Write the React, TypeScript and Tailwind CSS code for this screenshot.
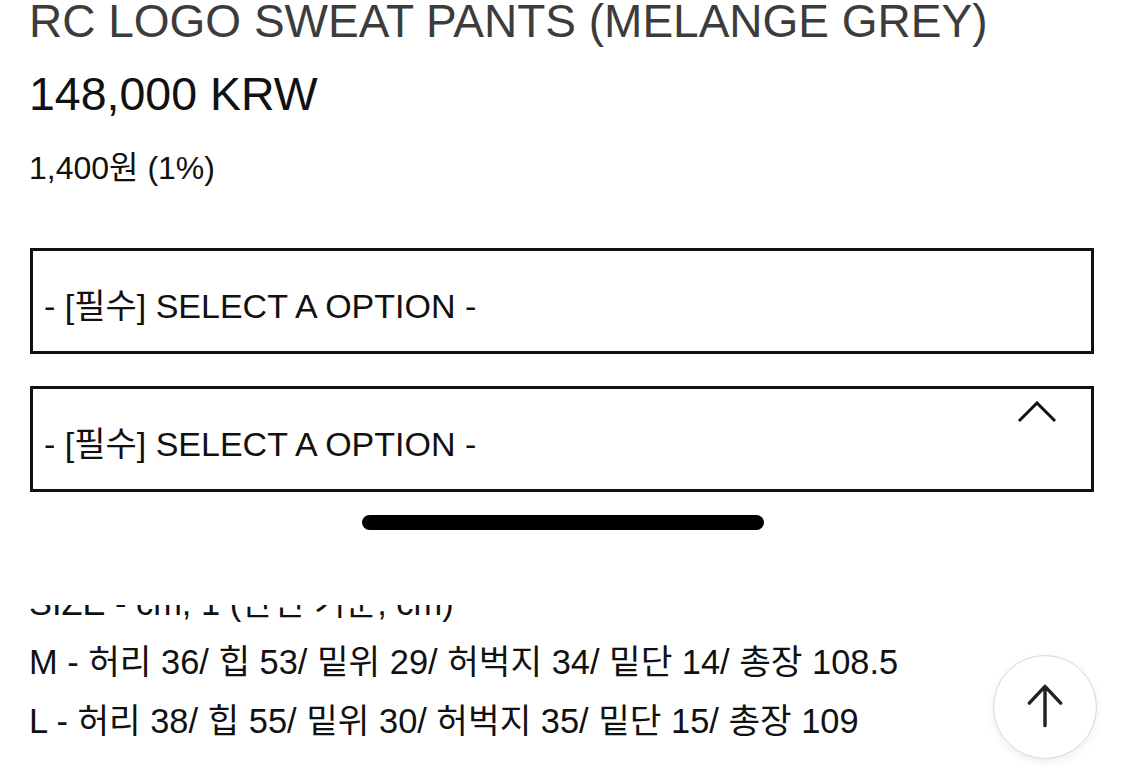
const sizeRows = [
  "M - 허리 36/ 힙 53/ 밑위 29/ 허벅지 34/ 밑단 14/ 총장 108.5",
  "L - 허리 38/ 힙 55/ 밑위 30/ 허벅지 35/ 밑단 15/ 총장 109",
];

const OptionSelect = ({ open }: { open?: boolean }) => (
  <div className="relative ml-px flex h-[106px] w-[1064px] items-center border-[3px] border-[#111] pl-[11px] pt-[10px]">
    <span className="text-[34px] leading-[34px] text-[#111]">- [필수] SELECT A OPTION -</span>
    {open && (
      <svg className="absolute right-[34px] top-[12px]" width="40" height="24" viewBox="0 0 40 24" fill="none">
        <polyline points="2,20 20,2 38,20" stroke="#111" strokeWidth="3" />
      </svg>
    )}
  </div>
);

export default function App() {
  return (
    <div className="relative h-[775px] w-full overflow-hidden bg-white font-['Liberation_Sans','Noto_Sans_CJK_KR',sans-serif]">
      <div className="pl-[29px]">
        <h1 className="text-[46px] font-normal leading-[43px] text-[#3c3c3c]">RC LOGO SWEAT PANTS (MELANGE GREY)</h1>
        <p className="mt-[28px] text-[46.5px] leading-[46px] text-[#111]">148,000 KRW</p>
        <p className="mt-[35px] text-[32px] leading-[32px] text-[#111]">1,400원 (1%)</p>

        <div className="mt-[64px] flex flex-col gap-[32px]">
          <OptionSelect />
          <OptionSelect open />
        </div>
      </div>

      {/* drag handle of the option sheet */}
      <div className="mt-[23px] flex justify-center">
        <div className="h-[15px] w-[402px] rounded-full bg-black" />
      </div>

      {/* size table, partly hidden under the sheet */}
      <div className="mt-[75px] pl-[29px] text-[34.4px] text-[#111]">
        <div className="h-[28px] overflow-hidden">
          <p className="-mt-[31px] leading-[59px]">SIZE - cm, 1 (단면 기준, cm)</p>
        </div>
        {sizeRows.map((row, i) => (
          <p key={i} className="leading-[59px]">{row}</p>
        ))}
      </div>

      <button className="absolute bottom-[16px] right-[28px] flex h-[104px] w-[104px] items-center justify-center rounded-full border border-[#d8d8d8] bg-white shadow-[0_3px_8px_rgba(0,0,0,0.07)]">
        <svg width="104" height="104" viewBox="0 0 104 104" fill="none">
          <path d="M52 71V31M36 48l16-17 16 17" stroke="#222" strokeWidth="3.5" strokeLinecap="round" strokeLinejoin="round" />
        </svg>
      </button>
    </div>
  );
}
